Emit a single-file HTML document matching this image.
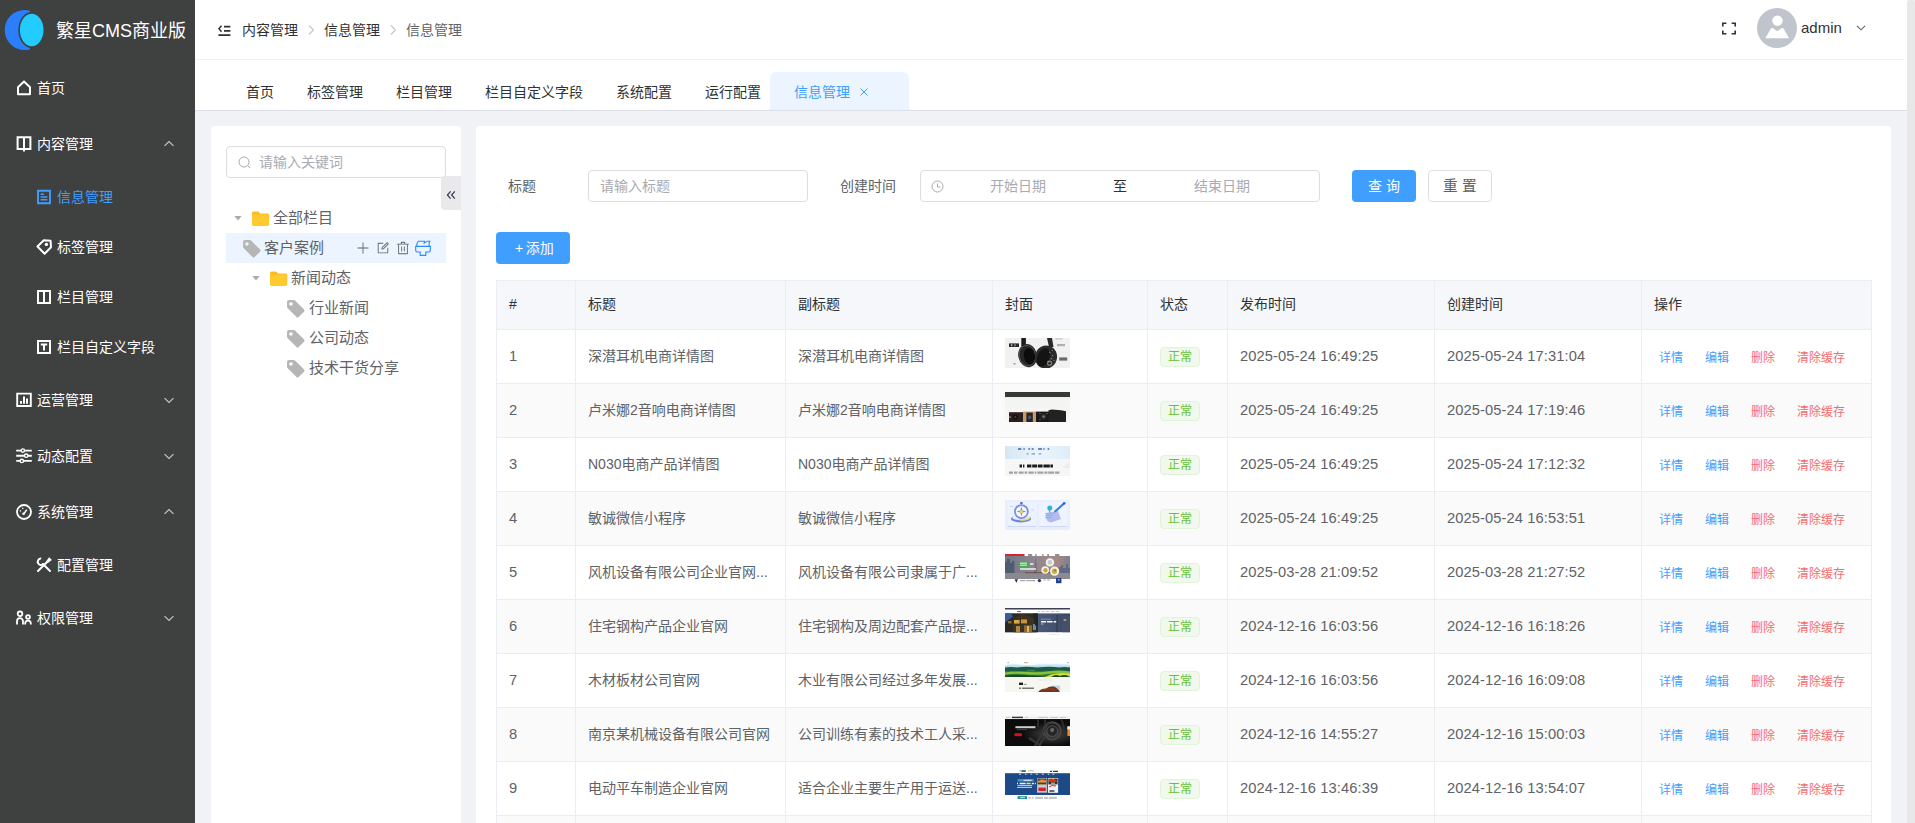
<!DOCTYPE html>
<html lang="zh-CN"><head><meta charset="utf-8"><title>繁星CMS商业版 - 信息管理</title>
<style>
*{box-sizing:border-box;margin:0;padding:0}
html,body{width:1915px;height:823px;overflow:hidden;background:#f0f2f5}
body{font-family:"Liberation Sans","Noto Sans CJK SC",sans-serif;font-size:14px;color:#606266;-webkit-font-smoothing:antialiased}
#app{position:relative;width:1915px;height:823px;overflow:hidden}
svg{display:block}
/* sidebar */
.side{position:absolute;left:0;top:0;width:195px;height:823px;background:#3f4040;color:#fff}
.logo{position:absolute;left:0;top:0;width:195px;height:60px}
.logo svg{position:absolute;left:3px;top:8px}
.logo .t{position:absolute;left:56px;top:1px;line-height:60px;font-size:18px;color:#fff;white-space:nowrap;letter-spacing:0}
.mi{position:absolute;left:0;width:195px;color:#fff;font-size:14px;white-space:nowrap}
.mi .ic{position:absolute}
.mi .tx{position:absolute;top:0}
.mi.top{height:56px;line-height:56px}
.mi.sub{height:50px;line-height:50px}
.mi.top .ic{left:16px;top:20px}
.mi.top .tx{left:37px}
.mi.sub .ic{left:36px;top:17px}
.mi.sub .tx{left:57px}
.mi .ar{position:absolute;left:163px;top:22px}
.mi.act{color:#409eff}
/* header */
.hdr{position:absolute;left:195px;top:0;width:1712px;height:60px;background:#fff}
.hdr:after{content:"";position:absolute;left:0;top:59px;width:1709px;height:1px;background:#f0f0f0}
.hdr .bc{position:absolute;top:0;line-height:60px;font-size:14px;color:#303133;white-space:nowrap}
.hdr .bc.l{color:#606266}
.hdr .sep{position:absolute;top:24px}
.tabs{position:absolute;left:195px;top:60px;width:1712px;height:51px;background:#fff;border-bottom:1px solid #dcdfe6}
.tab{position:absolute;top:12px;height:38px;line-height:40px;font-size:14px;color:#303133;white-space:nowrap}
.tab.act{color:#409eff}
/* content */
.content{position:absolute;left:195px;top:111px;width:1712px;height:712px;background:#f0f2f5}
.tree{position:absolute;left:16px;top:15px;width:250px;height:720px;background:#fff;border-radius:4px}
.main{position:absolute;left:281px;top:15px;width:1415px;height:720px;background:#fff;border-radius:4px}
.inp{position:absolute;height:32px;border:1px solid #dbdde3;border-radius:4px;background:#fff;color:#a8abb2;font-size:14px;line-height:30px;white-space:nowrap}
.tn{position:absolute;left:15px;width:220px;height:30px;line-height:30px;font-size:15px;color:#606266;white-space:nowrap}
.tn.cur{background:#ecf5ff}
.tn .ic{position:absolute}
.tn .tx{position:absolute;top:0}
.lbl{position:absolute;font-size:14px;color:#606266;line-height:32px;white-space:nowrap}
.btn{position:absolute;height:32px;line-height:32px;border-radius:4px;font-size:14px;text-align:center;white-space:nowrap}
.btn.p{background:#409eff;color:#fff}
.btn.d{background:#fff;border:1px solid #dcdfe6;color:#606266;line-height:30px}
/* table */
.tbl{position:absolute;left:20px;top:154px;width:1376px;border-left:1px solid #ebedf2;border-top:1px solid #ebedf2;font-size:14px}
.thead,.tr{display:flex;width:1375px}
.thead{height:49px;background:#f5f7fa;color:#303133}
.tr{height:54px;background:#fff}
.tr.odd{background:#fafafa}
.c{border-right:1px solid #ebedf2;border-bottom:1px solid #ebedf2;padding-left:12px;white-space:nowrap;overflow:hidden;position:relative;flex:none}
.thead .c{line-height:47px;height:49px}
.tr .c{line-height:52px;height:54px}
.c1{width:79px}.c2{width:210px}.c3{width:207px}.c4{width:155px}.c5{width:80px}.c6{width:207px}.c7{width:207px}.c8{width:230px}
.tag{display:inline-block;width:40px;height:20px;line-height:18px;border:1px solid #e1f3d8;background:#f0f9eb;color:#67c23a;font-size:12px;text-align:center;border-radius:4px;vertical-align:middle;position:relative;top:0}
.d,.n{font-size:14.7px;letter-spacing:.1px}
.c8 a{font-size:12px;position:absolute;top:2px}
.c8 a.b{color:#409eff}.c8 a.r{color:#f56c6c}
.th{position:absolute;left:12px;top:8px;width:65px;height:30px;overflow:hidden}
.sbar{position:absolute;left:1907px;top:0;width:8px;height:823px;background:#f0f2f5}
.sthumb{position:absolute;left:0;top:0;width:8px;height:823px;background:#e8e8e8;border-radius:4px 4px 0 0}

</style></head>
<body>
<div id="app">
<div class="side">
 <div class="logo">
  <svg width="44" height="44" viewBox="0 0 44 44"><circle cx="21.7" cy="22" r="20" fill="#2b7fff"/><rect x="27" y="0" width="17" height="44" fill="#3f4040"/><ellipse cx="28.7" cy="22" rx="13.4" ry="18" fill="#3f4040"/><ellipse cx="28.7" cy="22" rx="11.8" ry="16.2" fill="#22ccff"/></svg>
  <div class="t">繁星CMS商业版</div>
 </div>
 <div class="mi top" style="top:60px">
  <svg class="ic" width="16" height="16" viewBox="0 0 16 16" fill="none" stroke="#fff" stroke-width="2" stroke-linejoin="round"><path d="M2 7.2 L8 1.6 L14 7.2 V14.2 H2 Z"/></svg>
  <span class="tx">首页</span>
 </div>
 <div class="mi top" style="top:116px">
  <svg class="ic" width="16" height="16" viewBox="0 0 16 16" fill="none" stroke="#fff" stroke-width="2"><path d="M1.6 1.2 H14.4 V13 H1.6 Z M8 1.2 V15.6"/></svg>
  <span class="tx">内容管理</span>
  <svg class="ar" width="12" height="12" viewBox="0 0 12 12" fill="none" stroke="#c8c8c8" stroke-width="1.1"><path d="M1.5 7.8 L6 3.6 L10.5 7.8"/></svg>
 </div>
 <div class="mi sub act" style="top:172px">
  <svg class="ic" width="16" height="16" viewBox="0 0 16 16" fill="none" stroke="#409eff" stroke-width="1.9"><path d="M2 1.8 H14 V14.2 H2 Z"/><path d="M4.6 5.2 H8 M4.6 8 H11.4 M4.6 10.8 H11.4" stroke-width="1.4"/></svg>
  <span class="tx">信息管理</span>
 </div>
 <div class="mi sub" style="top:222px">
  <svg class="ic" width="16" height="16" viewBox="0 0 16 16" fill="none" stroke="#fff" stroke-width="2" stroke-linejoin="round"><path d="M1.5 7.5 L7.8 1.3 L14.6 1.8 L15 8.3 L8.6 14.7 Z"/><circle cx="10.4" cy="5.4" r="1.7" fill="#fff" stroke="none"/></svg>
  <span class="tx">标签管理</span>
 </div>
 <div class="mi sub" style="top:272px">
  <svg class="ic" width="16" height="16" viewBox="0 0 16 16" fill="none" stroke="#fff" stroke-width="2"><path d="M2 2 H14 V14 H2 Z M8 2 V14"/></svg>
  <span class="tx">栏目管理</span>
 </div>
 <div class="mi sub" style="top:322px">
  <svg class="ic" width="16" height="16" viewBox="0 0 16 16" fill="none" stroke="#fff" stroke-width="2"><path d="M2 2 H14 V14 H2 Z"/><path d="M4.8 5.6 H11.2 M8 5.6 V11.6" stroke-width="2"/></svg>
  <span class="tx">栏目自定义字段</span>
 </div>
 <div class="mi top" style="top:372px">
  <svg class="ic" width="16" height="16" viewBox="0 0 16 16" fill="none" stroke="#fff" stroke-width="1.9"><path d="M1.2 1.6 H14.8 V14 H1.2 Z"/><path d="M5 9 V11.8 M8 4.6 V11.8 M11 6.6 V11.8" stroke-width="2"/></svg>
  <span class="tx">运营管理</span>
  <svg class="ar" width="12" height="12" viewBox="0 0 12 12" fill="none" stroke="#c8c8c8" stroke-width="1.1"><path d="M1.5 4.2 L6 8.4 L10.5 4.2"/></svg>
 </div>
 <div class="mi top" style="top:428px">
  <svg class="ic" width="16" height="16" viewBox="0 0 16 16" fill="none" stroke="#fff" stroke-width="1.9"><path d="M0.2 2.6 H15.8 M0.2 7.7 H15.8 M0.2 12.9 H15.8"/><circle cx="6.8" cy="2.6" r="1.7" fill="#3f4040" stroke-width="1.4"/><circle cx="10.2" cy="7.7" r="1.7" fill="#3f4040" stroke-width="1.4"/><circle cx="5.8" cy="12.9" r="1.7" fill="#3f4040" stroke-width="1.4"/></svg>
  <span class="tx">动态配置</span>
  <svg class="ar" width="12" height="12" viewBox="0 0 12 12" fill="none" stroke="#c8c8c8" stroke-width="1.1"><path d="M1.5 4.2 L6 8.4 L10.5 4.2"/></svg>
 </div>
 <div class="mi top" style="top:484px">
  <svg class="ic" width="16" height="16" viewBox="0 0 16 16" fill="none" stroke="#fff" stroke-width="1.8"><circle cx="8" cy="8" r="7"/><path d="M8 9.6 L10.8 5.6" stroke-width="1.6"/><circle cx="7.6" cy="9.8" r="1.3" fill="#fff" stroke="none"/><path d="M3.8 6.6 L5 7.2 M6.6 3.8 L7 5" stroke-width="1.2"/></svg>
  <span class="tx">系统管理</span>
  <svg class="ar" width="12" height="12" viewBox="0 0 12 12" fill="none" stroke="#c8c8c8" stroke-width="1.1"><path d="M1.5 7.8 L6 3.6 L10.5 7.8"/></svg>
 </div>
 <div class="mi sub" style="top:540px">
  <svg class="ic" width="16" height="16" viewBox="0 0 16 16" fill="none" stroke="#fff" stroke-width="2" stroke-linecap="round"><path d="M2 14 L11 5 M10.4 5.6 L13.2 1.8 L14.4 3 L10.6 5.8"/><path d="M7 7 L14 14"/><path d="M5.2 1.6 A3.2 3.2 0 1 0 7.6 6.6" stroke-linecap="butt"/></svg>
  <span class="tx">配置管理</span>
 </div>
 <div class="mi top" style="top:590px">
  <svg class="ic" width="16" height="16" viewBox="0 0 16 16" fill="none" stroke="#fff" stroke-width="1.8"><circle cx="4" cy="3.8" r="2.3"/><path d="M1 14.4 V11.2 A3 3 0 0 1 7 11.2 V14.4"/><circle cx="12" cy="7" r="1.9"/><path d="M9.2 14.4 V13.4 A2.8 2.8 0 0 1 14.8 13.4 V14.4"/></svg>
  <span class="tx">权限管理</span>
  <svg class="ar" width="12" height="12" viewBox="0 0 12 12" fill="none" stroke="#c8c8c8" stroke-width="1.1"><path d="M1.5 4.2 L6 8.4 L10.5 4.2"/></svg>
 </div>
</div>

<div class="hdr">
 <svg style="position:absolute;left:23px;top:23px" width="14" height="14" viewBox="0 0 14 14" fill="none" stroke="#303133" stroke-width="1.6"><path d="M6 3.6 H12.4 M6 7.9 H12.4 M0.4 12.1 H12.4" stroke-width="1.7"/><path d="M3.5 2.7 L0.9 5.75 L3.5 8.8" stroke-width="1.5"/></svg>
 <span class="bc" style="left:47px">内容管理</span>
 <svg class="sep" style="left:111px" width="10" height="12" viewBox="0 0 10 12" fill="none" stroke="#c0c4cc" stroke-width="1.1"><path d="M3 1.5 L7.4 6 L3 10.5"/></svg>
 <span class="bc" style="left:129px">信息管理</span>
 <svg class="sep" style="left:193px" width="10" height="12" viewBox="0 0 10 12" fill="none" stroke="#c0c4cc" stroke-width="1.1"><path d="M3 1.5 L7.4 6 L3 10.5"/></svg>
 <span class="bc l" style="left:211px">信息管理</span>
 <svg style="position:absolute;left:1526px;top:22px" width="16" height="13" viewBox="0 0 16 13" fill="none" stroke="#303133" stroke-width="1.6"><path d="M1.8 4.4 V1.3 H5.4 M10.6 1.3 H14.2 V4.4 M14.2 8.6 V11.7 H10.6 M5.4 11.7 H1.8 V8.6"/></svg>
 <svg style="position:absolute;left:1562px;top:8px" width="40" height="40" viewBox="0 0 40 40"><circle cx="20" cy="20" r="20" fill="#c0c4cc"/><circle cx="20.5" cy="12.6" r="5.2" fill="#fff"/><path d="M8.3 30.2 L13.6 21 Q14.6 19.6 16 20.2 L20.2 23.2 L24.4 20.2 Q25.8 19.6 26.8 21 L32.1 30.2 Z" fill="#fff"/></svg>
 <span class="bc" style="left:1606px;font-size:15px;top:-2px">admin</span>
 <svg style="position:absolute;left:1660px;top:22px" width="12" height="12" viewBox="0 0 12 12" fill="none" stroke="#606266" stroke-width="1.1"><path d="M2 3.8 L6 7.8 L10 3.8"/></svg>
</div>
<div class="tabs">
 <svg style="position:absolute;left:567px;top:12px" width="155" height="38" viewBox="0 0 155 38"><path d="M4.5 38 Q8 38 8 34 V7 Q8 0 15 0 H140 Q147 0 147 7 V34 Q147 38 150.5 38 Z" fill="#ecf5ff"/></svg>
 <span class="tab" style="left:51px">首页</span>
 <span class="tab" style="left:112px">标签管理</span>
 <span class="tab" style="left:201px">栏目管理</span>
 <span class="tab" style="left:290px">栏目自定义字段</span>
 <span class="tab" style="left:421px">系统配置</span>
 <span class="tab" style="left:510px">运行配置</span>
 <span class="tab act" style="left:599px">信息管理</span>
 <svg style="position:absolute;left:664px;top:27px" width="10" height="10" viewBox="0 0 10 10" fill="none" stroke="#409eff" stroke-width="1"><path d="M1.5 1.5 L8.5 8.5 M8.5 1.5 L1.5 8.5"/></svg>
</div>

<div class="content">
<div class="tree">
 <div class="inp" style="left:15px;top:20px;width:220px"><svg style="position:absolute;left:11px;top:9px" width="13" height="13" viewBox="0 0 13 13" fill="none" stroke="#a8abb2" stroke-width="1"><circle cx="6" cy="6" r="5"/><path d="M9.6 9.6 L12 12"/></svg><span style="position:absolute;left:32px;top:0">请输入关键词</span></div>
 <div style="position:absolute;left:230px;top:50px;width:20px;height:34px;background:#e9e9eb;border-radius:4px 0 0 4px"><svg style="position:absolute;left:5px;top:13.5px" width="10" height="10" viewBox="0 0 10 10" fill="none" stroke="#2f3a4f" stroke-width="1.2"><path d="M4.6 1.4 L1.4 5 L4.6 8.6 M8.8 1.4 L5.6 5 L8.8 8.6"/></svg></div>
 <div class="tn" style="top:77px">
  <svg class="ic" style="left:7.5px;top:13px" width="8" height="5.4" viewBox="0 0 8 6"><path d="M0 0 H8 L4 5 Z" fill="#a8abb2"/></svg>
  <svg class="ic" style="left:24px;top:7px" width="20" height="17" viewBox="0 0 20 17"><path d="M2 3 Q2 1.4 3.6 1.4 H7.6 Q8.4 1.4 9 2.2 L9.8 3.4 H17.6 Q19.2 3.4 19.2 5 V8 H2 Z" fill="#ffb922"/><path d="M2 4.4 H19.2 V14.2 Q19.2 16 17.4 16 H3.8 Q2 16 2 14.2 Z" fill="#ffc930"/></svg>
  <span class="tx" style="left:47px">全部栏目</span>
 </div>
 <div class="tn cur" style="top:107px">
  <svg class="ic" style="left:15.5px;top:5.5px" width="20" height="20" viewBox="0 0 19 19"><path d="M1 2.8 Q1 1 2.8 1 H7.4 Q8.2 1 8.8 1.6 L17.2 10 Q18.2 11 17.2 12 L12 17.2 Q11 18.2 10 17.2 L1.6 8.8 Q1 8.2 1 7.4 Z" fill="#b6b6b6"/><circle cx="4.7" cy="4.7" r="1.7" fill="#ecf5ff"/></svg>
  <span class="tx" style="left:38px">客户案例</span>
  <svg class="ic" style="left:130px;top:8px" width="14" height="14" viewBox="0 0 1024 1024"><path fill="#606266" d="M480 480V128a32 32 0 0 1 64 0v352h352a32 32 0 1 1 0 64H544v352a32 32 0 1 1-64 0V544H128a32 32 0 0 1 0-64z"/></svg>
  <svg class="ic" style="left:150px;top:7.5px" width="14" height="14" viewBox="0 0 1024 1024"><path fill="#606266" d="M832 512a32 32 0 1 1 64 0v352a32 32 0 0 1-32 32H160a32 32 0 0 1-32-32V160a32 32 0 0 1 32-32h352a32 32 0 0 1 0 64H192v640h640z"/><path fill="#606266" d="m469.952 554.240 52.8-7.552L847.104 222.336a32 32 0 1 0-45.248-45.248L477.44 501.44l-7.552 52.8zm422.4-422.4a96 96 0 0 1 0 135.808l-331.84 331.84a32 32 0 0 1-18.112 9.088L436.8 623.68a32 32 0 0 1-36.224-36.224l15.104-105.6a32 32 0 0 1 9.024-18.112l331.904-331.84a96 96 0 0 1 135.744 0z"/></svg>
  <svg class="ic" style="left:170px;top:8px" width="14" height="14" viewBox="0 0 1024 1024"><path fill="#606266" d="M160 256H96a32 32 0 0 1 0-64h256V95.936a32 32 0 0 1 32-32h256a32 32 0 0 1 32 32V192h256a32 32 0 1 1 0 64h-64v672a32 32 0 0 1-32 32H192a32 32 0 0 1-32-32zm448-64v-64H416v64zM224 896h576V256H224zm192-128a32 32 0 0 1-32-32V416a32 32 0 0 1 64 0v320a32 32 0 0 1-32 32m192 0a32 32 0 0 1-32-32V416a32 32 0 0 1 64 0v320a32 32 0 0 1-32 32"/></svg>
  <svg class="ic" style="left:188px;top:5.5px" width="18" height="18" viewBox="0 0 1024 1024"><path fill="#2b8cff" d="M896 448H128v192a64 64 0 0 0 64 64h192v192h256V704h192a64 64 0 0 0 64-64zm-770.752-64c0-47.552 5.248-90.24 15.552-128 14.72-54.016 42.496-107.392 83.2-160h417.28l-15.36 70.336L736 96h211.2c-24.832 42.88-41.92 96.256-51.2 160a663.872 663.872 0 0 0-6.144 128H960v256a128 128 0 0 1-128 128H704v160a32 32 0 0 1-32 32H352a32 32 0 0 1-32-32V768H192A128 128 0 0 1 64 640V384h61.248zm64 0h636.544c-2.048-45.824.256-91.584 6.848-137.216 4.48-30.848 10.688-59.776 18.688-86.784h-96.640l-221.12 141.248L561.92 160H256.512c-25.856 37.888-43.776 75.456-53.952 112.832-8.768 32.064-13.248 69.120-13.312 111.168z"/></svg>
 </div>
 <div class="tn" style="top:137px">
  <svg class="ic" style="left:25.5px;top:13px" width="8" height="5.4" viewBox="0 0 8 6"><path d="M0 0 H8 L4 5 Z" fill="#a8abb2"/></svg>
  <svg class="ic" style="left:42px;top:7px" width="20" height="17" viewBox="0 0 20 17"><path d="M2 3 Q2 1.4 3.6 1.4 H7.6 Q8.4 1.4 9 2.2 L9.8 3.4 H17.6 Q19.2 3.4 19.2 5 V8 H2 Z" fill="#ffb922"/><path d="M2 4.4 H19.2 V14.2 Q19.2 16 17.4 16 H3.8 Q2 16 2 14.2 Z" fill="#ffc930"/></svg>
  <span class="tx" style="left:65px">新闻动态</span>
 </div>
 <div class="tn" style="top:167px">
  <svg class="ic" style="left:59.5px;top:5.5px" width="20" height="20" viewBox="0 0 19 19"><path d="M1 2.8 Q1 1 2.8 1 H7.4 Q8.2 1 8.8 1.6 L17.2 10 Q18.2 11 17.2 12 L12 17.2 Q11 18.2 10 17.2 L1.6 8.8 Q1 8.2 1 7.4 Z" fill="#b6b6b6"/><circle cx="4.7" cy="4.7" r="1.7" fill="#fff"/></svg>
  <span class="tx" style="left:83px">行业新闻</span>
 </div>
 <div class="tn" style="top:197px">
  <svg class="ic" style="left:59.5px;top:5.5px" width="20" height="20" viewBox="0 0 19 19"><path d="M1 2.8 Q1 1 2.8 1 H7.4 Q8.2 1 8.8 1.6 L17.2 10 Q18.2 11 17.2 12 L12 17.2 Q11 18.2 10 17.2 L1.6 8.8 Q1 8.2 1 7.4 Z" fill="#b6b6b6"/><circle cx="4.7" cy="4.7" r="1.7" fill="#fff"/></svg>
  <span class="tx" style="left:83px">公司动态</span>
 </div>
 <div class="tn" style="top:227px">
  <svg class="ic" style="left:59.5px;top:5.5px" width="20" height="20" viewBox="0 0 19 19"><path d="M1 2.8 Q1 1 2.8 1 H7.4 Q8.2 1 8.8 1.6 L17.2 10 Q18.2 11 17.2 12 L12 17.2 Q11 18.2 10 17.2 L1.6 8.8 Q1 8.2 1 7.4 Z" fill="#b6b6b6"/><circle cx="4.7" cy="4.7" r="1.7" fill="#fff"/></svg>
  <span class="tx" style="left:83px">技术干货分享</span>
 </div>
</div>

<div class="main">
<span class="lbl" style="left:32px;top:44px">标题</span>
<div class="inp" style="left:112px;top:44px;width:220px"><span style="position:absolute;left:11px;top:0">请输入标题</span></div>
<span class="lbl" style="left:364px;top:44px">创建时间</span>
<div class="inp" style="left:444px;top:44px;width:400px">
 <svg style="position:absolute;left:10px;top:9px" width="13" height="13" viewBox="0 0 13 13" fill="none" stroke="#a8abb2" stroke-width="1"><circle cx="6.5" cy="6.5" r="5.5"/><path d="M6.5 3.4 V7 H9.6"/></svg>
 <span style="position:absolute;left:69px;top:0">开始日期</span>
 <span style="position:absolute;left:192px;top:0;color:#303133">至</span>
 <span style="position:absolute;left:273px;top:0">结束日期</span>
</div>
<div class="btn p" style="left:876px;top:44px;width:64px">查 询</div>
<div class="btn d" style="left:952px;top:44px;width:64px">重 置</div>
<div class="btn p" style="left:20px;top:106px;width:74px;text-align:left;padding-left:19px"><span style="margin-right:2.5px">+</span>添加</div>

<div class="tbl">
<div class="thead"><div class="c c1">#</div><div class="c c2">标题</div><div class="c c3">副标题</div><div class="c c4">封面</div><div class="c c5">状态</div><div class="c c6">发布时间</div><div class="c c7">创建时间</div><div class="c c8">操作</div></div>
<div class="tr"><div class="c c1"><span class="n">1</span></div><div class="c c2">深潜耳机电商详情图</div><div class="c c3">深潜耳机电商详情图</div><div class="c c4"><svg class="th" width="65" height="30" viewBox="0 0 65 30" ><rect width="65" height="30" fill="#f1f1f1"/><rect x="16.3" y="0" width="4.6" height="8" fill="#1c1c1c"/><path d="M42 0 H47 L48.5 9 H44 Z" fill="#2a2a2a"/><ellipse cx="22.7" cy="17.6" rx="9.4" ry="11.6" fill="#262626" transform="rotate(-12 22.7 17.6)"/><ellipse cx="24.5" cy="18.2" rx="5.6" ry="8.4" fill="#0c0c0c" transform="rotate(-12 24.5 18.2)"/><ellipse cx="22.4" cy="17.6" rx="8.2" ry="10.4" fill="none" stroke="#5a5a5a" stroke-width=".8" transform="rotate(-12 22.4 17.6)"/><ellipse cx="41" cy="19" rx="11" ry="11.6" fill="#2b2b2b" transform="rotate(18 41 19)"/><ellipse cx="38.4" cy="19.4" rx="6" ry="9.6" fill="#141414" transform="rotate(22 38.4 19.4)"/><circle cx="44.6" cy="25.2" r="2.6" fill="#8a7a6a"/><circle cx="44.6" cy="25.2" r="1.3" fill="#222"/><path d="M44 14 l1.4 .8 M47 17 l1.2 1 M45.6 20.6 l1.6 .4 M48.6 22 l1 1 M42.8 23 l1 1.2 M46.8 12 l1 .6" stroke="#bdbdbd" stroke-width=".7"/><rect x="4" y="5.4" width="10" height="3.6" fill="#2a2a2a"/><rect x="6.2" y="6.2" width="1" height="2" fill="#ddd"/><rect x="9.6" y="6.2" width=".8" height="2" fill="#ddd"/><rect x="50.5" y=".4" width="7" height="1" fill="#b8b8b8"/><rect x="52" y="6" width="8" height="2.2" fill="#b0b0b0"/><rect x="54.2" y="19.4" width="8" height="3.2" fill="#6a6a6a"/><rect x="8.5" y="25" width="2" height="1.4" fill="#999"/></svg></div><div class="c c5"><span class="tag">正常</span></div><div class="c c6"><span class="d">2025-05-24 16:49:25</span></div><div class="c c7"><span class="d">2025-05-24 17:31:04</span></div><div class="c c8"><a class="b" style="left:17px">详情</a><a class="b" style="left:63px">编辑</a><a class="r" style="left:109px">删除</a><a class="r" style="left:155px">清除缓存</a></div></div>
<div class="tr odd"><div class="c c1"><span class="n">2</span></div><div class="c c2">卢米娜2音响电商详情图</div><div class="c c3">卢米娜2音响电商详情图</div><div class="c c4"><svg class="th" width="65" height="30" viewBox="0 0 65 30" ><defs><linearGradient id="g2" x1="0" y1="0" x2="0" y2="1"><stop offset="0" stop-color="#e2e3e1"/><stop offset=".25" stop-color="#f4f4f3"/><stop offset="1" stop-color="#f7f7f6"/></linearGradient></defs><rect width="65" height="30" fill="url(#g2)"/><rect width="65" height="5" fill="#353a35"/><rect x="4" y="20.2" width="14" height="9.8" fill="#2a1f1d"/><circle cx="10.4" cy="25" r="2.6" fill="#15100f"/><circle cx="10.4" cy="25" r="1" fill="#3a4558"/><rect x="4" y="24.6" width="2" height="1" fill="#b9a48a"/><rect x="18" y="19.6" width="13" height="10.4" fill="#c79a6c"/><rect x="21.4" y="20.6" width="6.4" height="9.4" fill="#2a2320"/><circle cx="24.6" cy="25.4" r="1.8" fill="#3d5574"/><rect x="31" y="19.6" width="14" height="10.4" fill="#191919"/><circle cx="38.6" cy="24.6" r="3" fill="#2e2e2e"/><circle cx="38.6" cy="24.6" r="1.1" fill="#8a8a8a"/><circle cx="35" cy="21.4" r=".5" fill="#aaa"/><circle cx="42" cy="21.4" r=".5" fill="#aaa"/><circle cx="35" cy="27.8" r=".5" fill="#aaa"/><path d="M43.5 18.2 L47 17.4 L56 18.2 L61 19.2 V30 H43.5 Z" fill="#222"/></svg></div><div class="c c5"><span class="tag">正常</span></div><div class="c c6"><span class="d">2025-05-24 16:49:25</span></div><div class="c c7"><span class="d">2025-05-24 17:19:46</span></div><div class="c c8"><a class="b" style="left:17px">详情</a><a class="b" style="left:63px">编辑</a><a class="r" style="left:109px">删除</a><a class="r" style="left:155px">清除缓存</a></div></div>
<div class="tr"><div class="c c1"><span class="n">3</span></div><div class="c c2">N030电商产品详情图</div><div class="c c3">N030电商产品详情图</div><div class="c c4"><svg class="th" width="65" height="30" viewBox="0 0 65 30" ><defs><linearGradient id="g3" x1="0" y1="0" x2="1" y2="0"><stop offset="0" stop-color="#d6e6f5"/><stop offset=".5" stop-color="#eaf4fc"/><stop offset="1" stop-color="#dfecf8"/></linearGradient></defs><rect width="65" height="30" fill="#f6f6f6"/><rect width="65" height="13" fill="url(#g3)"/><path d="M13 3 h3.4 m2 0 h1.4 m3.6 0 h1.6 m1.6 0 h2 m4.4 0 h4 m1.4 0 h1.2 m3 0 h1.6" stroke="#3a68ad" stroke-width="1.3"/><path d="M21.6 7.8 h2 m3 0 h3.4 m3.6 0 h2.6" stroke="#6f9bd0" stroke-width="1.2"/><path d="M14.6 20 h2.4 m1 0 h1.4 m2.6 0 h4.4 m.8 0 h5 m.8 0 h4.6 m.8 0 h6.4 m.6 0 h2.6" stroke="#1c1c1c" stroke-width="2.8"/><path d="M4 26.6 h4 m1 0 h3.2 m1.4 0 h5 m1 0 h2.6 m1.2 0 h5.4 m1 0 h1.6 m1 0 h6 m1 0 h3 m.8 0 h6 m.8 0 h4.4" stroke="#a2a2a2" stroke-width="2.2"/><path d="M57 22 L65 15 V22 Z" fill="#ededed"/></svg></div><div class="c c5"><span class="tag">正常</span></div><div class="c c6"><span class="d">2025-05-24 16:49:25</span></div><div class="c c7"><span class="d">2025-05-24 17:12:32</span></div><div class="c c8"><a class="b" style="left:17px">详情</a><a class="b" style="left:63px">编辑</a><a class="r" style="left:109px">删除</a><a class="r" style="left:155px">清除缓存</a></div></div>
<div class="tr odd"><div class="c c1"><span class="n">4</span></div><div class="c c2">敏诚微信小程序</div><div class="c c3">敏诚微信小程序</div><div class="c c4"><svg class="th" width="65" height="30" viewBox="0 0 65 30" ><rect width="65" height="30" fill="#e8eefd"/><rect x="2.6" y="1.4" width="28.6" height="25.2" fill="#edf2ff"/><rect x="34" y="1.4" width="28.4" height="25.2" fill="#edf3ff"/><rect x="2.6" y="26.2" width="28.6" height=".8" fill="#c9d4f3"/><rect x="34" y="26.2" width="28.4" height=".8" fill="#c9d4f3"/><ellipse cx="16" cy="18.8" rx="10.2" ry="3.6" fill="#6e83e6"/><ellipse cx="16" cy="17.6" rx="8.8" ry="2.6" fill="#e9eeff"/><path d="M14 18.6 q5 1.6 10.6 -1.4 l.6 1.6 q-5 3 -11 1.4 z" fill="#f0e04a"/><circle cx="16.4" cy="11.6" r="7.4" fill="#7d8fe3"/><circle cx="16.4" cy="11.6" r="5.6" fill="#f3f6ff"/><path d="M16.4 6.6 L17.4 10.6 L21.4 11.6 L17.4 12.6 L16.4 16.6 L15.4 12.6 L11.4 11.6 L15.4 10.6 Z" fill="#6d8be8"/><circle cx="16.4" cy="11.6" r="1.6" fill="#f2d83a"/><rect x="15" y="2" width="2.8" height="2" rx="1" fill="#5564c9"/><path d="M5 6.4 h3 M26 10 h3" stroke="#b9c4f2" stroke-width=".8"/><path d="M41 13 L53 11 L56 19 L46 22.6 Q42 22 41 18 Z" fill="#b6b9ee"/><path d="M40.4 13.6 h8 M40.4 15.6 h7 M40.4 17.6 h6" stroke="#69c8ee" stroke-width="1.1"/><circle cx="44.8" cy="8" r="2.5" fill="#35b1d9"/><path d="M44.4 10 l.4 2.6" stroke="#35b1d9" stroke-width="1.2"/><path d="M58.6 2.6 L60 4 L51 12 L49 12.6 L49.6 10.6 Z" fill="#2f7ce6"/><circle cx="59.2" cy="3.2" r="1.3" fill="#2a62d4"/></svg></div><div class="c c5"><span class="tag">正常</span></div><div class="c c6"><span class="d">2025-05-24 16:49:25</span></div><div class="c c7"><span class="d">2025-05-24 16:53:51</span></div><div class="c c8"><a class="b" style="left:17px">详情</a><a class="b" style="left:63px">编辑</a><a class="r" style="left:109px">删除</a><a class="r" style="left:155px">清除缓存</a></div></div>
<div class="tr"><div class="c c1"><span class="n">5</span></div><div class="c c2">风机设备有限公司企业官网...</div><div class="c c3">风机设备有限公司隶属于广...</div><div class="c c4"><svg class="th" width="65" height="30" viewBox="0 0 65 30" ><defs><linearGradient id="g5" x1="0" y1="0" x2="1" y2="0"><stop offset="0" stop-color="#6d7585"/><stop offset=".45" stop-color="#8f8792"/><stop offset=".8" stop-color="#a58a86"/><stop offset="1" stop-color="#7d7f90"/></linearGradient></defs><rect width="65" height="30" fill="#fff"/><rect y="2" width="65" height="23" fill="url(#g5)"/><rect y="19" width="65" height="6" fill="#8c8b92" opacity=".85"/><path d="M0 8 h2 v-3 h3 v4 h2 v-2 h2.4 v12 H0 Z" fill="#4d5d70"/><path d="M29 19 L30.6 2 L32.2 19 Z" fill="#776f78"/><path d="M54 19 v-6 h2 v-2 h2 v3 h3 v-4 h2 v4 h2 v5 Z" fill="#5f6b86"/><path d="M20 18.6 h34" stroke="#6a4a3a" stroke-width="1.4" opacity=".7"/><rect width="19.5" height="2" fill="#da2330"/><path d="M23 1 h4.2 m3 0 h1.4 m5.6 0 h1.4 m3.6 0 h1.8 m6 0 h4.4" stroke="#222" stroke-width="1.1"/><rect x="14" y="7.6" width="9.4" height="5.4" rx="1.4" fill="#44ad4c"/><path d="M15 9.2 h7 M15 11.2 h7" stroke="#e8f6e4" stroke-width="1"/><path d="M25 10 h3.4 M15 15 h16" stroke="#f1f1f1" stroke-width="1.3"/><circle cx="44.9" cy="8.4" r="4.2" fill="#f4f4f4"/><circle cx="44.9" cy="8.4" r="2.4" fill="#c9c9c9"/><circle cx="40.2" cy="16" r="3.8" fill="#f6f4ea"/><circle cx="40.4" cy="16.2" r="2.2" fill="#d0a23a"/><circle cx="49.6" cy="17.2" r="4.6" fill="#f6f4ea"/><circle cx="49.4" cy="17.2" r="2.7" fill="#d6b03a"/><circle cx="50" cy="16.4" r="1.1" fill="#7d7d7d"/><path d="M9.6 25.2 h3.4 l-1.7 3.6 z" fill="#1d2c57"/><path d="M15 26.6 h5.4 m.8 0 h9" stroke="#a9a9a9" stroke-width="1.4"/><circle cx="34.4" cy="26.6" r="1.7" fill="#1d3a74"/><path d="M38.6 26 h2 m1.6 0 h2.6" stroke="#999" stroke-width="1.2"/><rect x="51" y="24" width="5.4" height="5.2" fill="#20408f"/><rect x="52.8" y="25.4" width="1.8" height="1" fill="#dfe6f7"/></svg></div><div class="c c5"><span class="tag">正常</span></div><div class="c c6"><span class="d">2025-03-28 21:09:52</span></div><div class="c c7"><span class="d">2025-03-28 21:27:52</span></div><div class="c c8"><a class="b" style="left:17px">详情</a><a class="b" style="left:63px">编辑</a><a class="r" style="left:109px">删除</a><a class="r" style="left:155px">清除缓存</a></div></div>
<div class="tr odd"><div class="c c1"><span class="n">6</span></div><div class="c c2">住宅钢构产品企业官网</div><div class="c c3">住宅钢构及周边配套产品提...</div><div class="c c4"><svg class="th" width="65" height="30" viewBox="0 0 65 30" ><defs><linearGradient id="g6" x1="0" y1="0" x2="1" y2="0"><stop offset="0" stop-color="#56658a"/><stop offset=".55" stop-color="#4a5878"/><stop offset="1" stop-color="#3d4862"/></linearGradient></defs><rect width="65" height="30" fill="#fff"/><rect width="65" height="1.5" fill="#3b4152"/><path d="M12 3.6 h4" stroke="#3a62a8" stroke-width="1"/><path d="M33 3.6 h2 m1.6 0 h3 m1.4 0 h3 m2 0 h3.4 m1.4 0 h3.4" stroke="#b6b6b6" stroke-width=".8"/><rect y="5.4" width="65" height="18.8" fill="url(#g6)"/><path d="M0 5.4 H33 V24.2 H0 Z" fill="#2b2a20"/><path d="M0 5.4 h6 l2 3 l-8 6 z" fill="#3a5d9a"/><path d="M8 10 L18 5.8 L31 11 V24.2 H8 Z" fill="#3a3323"/><rect x="9" y="12" width="5.6" height="3.6" fill="#d9a64a"/><rect x="16" y="11.4" width="6" height="4" fill="#c9913d"/><rect x="11" y="18" width="4" height="6.2" fill="#b7853a"/><rect x="19" y="17.4" width="8" height="6.8" fill="#8d6a33"/><rect x="22" y="18" width="2" height="6.2" fill="#e0b860"/><rect x="28" y="16" width="3" height="6" fill="#6d89b8"/><rect x="3" y="13" width="3.6" height="2.4" fill="#8a6a35"/><path d="M28 5.4 h5 v12 h-3 z" fill="#20251f"/><rect x="51.6" y="6.6" width="1" height="17.6" fill="#2f394f"/><rect x="57" y="8" width="8" height="16.2" fill="#44506a"/><rect x="58.6" y="11" width="2.6" height="2" fill="#9d9a74"/><path d="M36 11.2 h10" stroke="#9aa6c2" stroke-width=".7"/><path d="M36 13.8 h5 m1 0 h5.6 m1 0 h2.6" stroke="#f4f6fa" stroke-width="1.5"/><path d="M36 16 h2.4" stroke="#c9d0e0" stroke-width=".8"/><path d="M44 26.6 h11" stroke="#ececec" stroke-width="1"/></svg></div><div class="c c5"><span class="tag">正常</span></div><div class="c c6"><span class="d">2024-12-16 16:03:56</span></div><div class="c c7"><span class="d">2024-12-16 16:18:26</span></div><div class="c c8"><a class="b" style="left:17px">详情</a><a class="b" style="left:63px">编辑</a><a class="r" style="left:109px">删除</a><a class="r" style="left:155px">清除缓存</a></div></div>
<div class="tr"><div class="c c1"><span class="n">7</span></div><div class="c c2">木材板材公司官网</div><div class="c c3">木业有限公司经过多年发展...</div><div class="c c4"><svg class="th" width="65" height="30" viewBox="0 0 65 30" ><defs><linearGradient id="g7" x1="0" y1="0" x2="0" y2="1"><stop offset="0" stop-color="#eaf4fb"/><stop offset="1" stop-color="#9fd0ea"/></linearGradient></defs><rect width="65" height="30" fill="#f7f7f2"/><rect width="65" height="1.6" fill="#fff"/><path d="M2.4 .8 h1.6 M19 .8 h4" stroke="#9a8a5a" stroke-width=".8"/><path d="M62 .8 h2" stroke="#7aa05a" stroke-width=".8"/><rect y="1.6" width="65" height="4.4" fill="url(#g7)"/><path d="M0 3 q8 -2 16 -.4 q8 1.4 18 -.6 q10 -1.6 31 .6 V1.6 H0 Z" fill="#fff"/><path d="M0 5.4 q6 -1 12 0 q10 -1.6 20 .2 q12 -1.8 22 -.2 q6 -1 11 .2 V10 H0 Z" fill="#1d5a44"/><rect y="9" width="65" height="6" fill="#2f7a35"/><path d="M0 10.6 q10 -2 24 -.6 q10 1 20 -.8 q10 -1.6 21 .4 v2.4 q-12 -1.4 -22 0 q-12 1.6 -24 .2 q-10 -1 -19 .6 z" fill="#86c33a"/><path d="M46 12.6 q8 -2.4 19 -1 V15 H40 Z" fill="#d4dc45"/><path d="M47 14.4 q4 -2.6 8 -.4 q4 -2 9 .2 L65 15 H46 Z" fill="#1f4a22"/><path d="M0 13.4 q14 -1 30 .4 l10 1.2 H0 Z" fill="#17482a"/><path d="M5 9.4 h10 M22 8.4 h8" stroke="#3f8e6a" stroke-width=".9"/><rect x="14" y="20.6" width="4" height="2.4" fill="#1e1e1e"/><path d="M18.6 22.4 h3" stroke="#777" stroke-width=".8"/><path d="M14 26.2 h2 m1 0 h12" stroke="#777" stroke-width="1.5"/><path d="M33 18 h4 m2 0 h3 m2 0 h4" stroke="#e3e3dc" stroke-width="1"/><rect x="47" y="23.6" width="8.2" height="4.6" fill="#b9d3e8"/><path d="M33 30 q3 -3.4 8 -3.4 q3 -2.6 7 -2 q4 .6 7 5.4 Z" fill="#74341c"/><path d="M38 28 q3 -1.6 6 -1 M45 27 q3 -.4 5 1.4" stroke="#a3542c" stroke-width=".8" fill="none"/></svg></div><div class="c c5"><span class="tag">正常</span></div><div class="c c6"><span class="d">2024-12-16 16:03:56</span></div><div class="c c7"><span class="d">2024-12-16 16:09:08</span></div><div class="c c8"><a class="b" style="left:17px">详情</a><a class="b" style="left:63px">编辑</a><a class="r" style="left:109px">删除</a><a class="r" style="left:155px">清除缓存</a></div></div>
<div class="tr odd"><div class="c c1"><span class="n">8</span></div><div class="c c2">南京某机械设备有限公司官网</div><div class="c c3">公司训练有素的技术工人采...</div><div class="c c4"><svg class="th" width="65" height="30" viewBox="0 0 65 30" ><defs><radialGradient id="g8" cx=".72" cy=".55" r=".45"><stop offset="0" stop-color="#4a4a4a"/><stop offset=".5" stop-color="#2a2a2a"/><stop offset="1" stop-color="#0c0c0c"/></radialGradient></defs><rect width="65" height="30" fill="#0c0c0c"/><rect width="65" height="3.2" fill="#f3f3f3"/><path d="M7 1.4 h11" stroke="#3a3a3a" stroke-width="1.4"/><path d="M1 1.4 h4 M20 1.4 h3 m10 0 h10 m2 0 h8 m2 0 h6" stroke="#c4c4c4" stroke-width=".9"/><rect y="3.2" width="65" height="26.8" fill="url(#g8)"/><circle cx="47.2" cy="15" r="8.6" fill="none" stroke="#444" stroke-width="2.2"/><circle cx="47.2" cy="15" r="5.4" fill="#262626" stroke="#585858" stroke-width=".8"/><circle cx="47.2" cy="14" r="2" fill="#6a6a6a"/><path d="M30 30 L44 6 M34 30 L40 20 M24 22 L36 30" stroke="#363636" stroke-width="2.2"/><path d="M33 3.2 v8 M40 3.2 v5 M56 3.2 q4 6 2 14" stroke="#2b2b2b" stroke-width="2" fill="none"/><path d="M10.4 11.2 h20" stroke="#cfcfcf" stroke-width="2"/><path d="M12 13.6 h10" stroke="#555" stroke-width=".8"/><rect x="9.4" y="17.2" width="7.6" height="3" rx="1" fill="#d0121c"/><rect x="62.4" y="10.4" width="2.6" height="9.6" fill="#e8852a"/><rect x="62.4" y="10.4" width="2.6" height="3" fill="#f1efe8"/></svg></div><div class="c c5"><span class="tag">正常</span></div><div class="c c6"><span class="d">2024-12-16 14:55:27</span></div><div class="c c7"><span class="d">2024-12-16 15:00:03</span></div><div class="c c8"><a class="b" style="left:17px">详情</a><a class="b" style="left:63px">编辑</a><a class="r" style="left:109px">删除</a><a class="r" style="left:155px">清除缓存</a></div></div>
<div class="tr"><div class="c c1"><span class="n">9</span></div><div class="c c2">电动平车制造企业官网</div><div class="c c3">适合企业主要生产用于运送...</div><div class="c c4"><svg class="th" width="65" height="30" viewBox="0 0 65 30" ><rect width="65" height="30" fill="#fff"/><path d="M14 .9 h2.2" stroke="#999" stroke-width=".8"/><rect x="16.4" y=".2" width="4.4" height="1.7" fill="#1d6b5a"/><path d="M23.4 .8 h5.4" stroke="#a8a8a8" stroke-width=".9"/><path d="M45 1.4 h2 m1 0 h5" stroke="#2a3a4a" stroke-width="1.2"/><rect y="3.2" width="65" height="21.8" fill="#1c4a86"/><path d="M14 4.2 h2 m4 0 h1.6 m4 0 h1.6 m3.6 0 h2 m4 0 h2 m4 0 h1.6 m3 0 h2" stroke="#dfe8f4" stroke-width=".9"/><rect x="12.6" y="9" width="16.2" height="2.6" fill="#3f8ee2"/><path d="M18.6 10.3 h8" stroke="#eaf3ff" stroke-width="1"/><path d="M12 13.5 h1 m1.6 0 h6 m1 0 h1.6 m3.6 0 h2 m1 0 h1" stroke="#f4f6fa" stroke-width="1.5"/><path d="M22.8 13.5 h3" stroke="#f0d63a" stroke-width="1.5"/><path d="M12.6 15.6 h14.6 M12 17.4 h15" stroke="#c3d3ea" stroke-width="1"/><rect x="32" y="8" width="10" height="14.8" fill="#a9b3c4"/><rect x="42.9" y="8" width="10.2" height="14.8" fill="#e9ecf2"/><rect x="32.6" y="8.6" width="8.8" height="5.8" fill="#5a3a2a"/><path d="M33 11 q4 -3 8 -.4 v2 h-8 z" fill="#d8a43a"/><path d="M34 10.4 q3 -1.6 6 0" stroke="#e8452a" stroke-width="1" fill="none"/><rect x="32.6" y="15.6" width="8.8" height="6.4" fill="#c8ccd6"/><path d="M33.4 17.6 h7.4 v3.4 h-7.4 z" fill="#d82027"/><path d="M32.6 15.4 h8.8" stroke="#ecd23a" stroke-width="1.2"/><rect x="43.4" y="8.6" width="9.2" height="5.8" fill="#33302e"/><path d="M44 10 h7.6 v2 h-7.6 z" fill="#e2261c"/><path d="M44 9 h1.6 m1 0 h3" stroke="#f0d63a" stroke-width=".9"/><path d="M46 13.2 h4" stroke="#e8c43a" stroke-width="1.2"/><rect x="43.4" y="15.2" width="9.2" height="3.2" fill="#f6f6f6"/><path d="M44 17 l3 -1.4 l4 .4" stroke="#d8262a" stroke-width="1" fill="none"/><rect x="43.4" y="18.8" width="9.2" height="3.4" fill="#f0f2f6"/><path d="M44.4 21 h5" stroke="#3a2a2a" stroke-width="1.4"/><rect x="12.6" y="26.2" width="9.4" height="2.8" fill="#1f8a8c"/><path d="M15 27.6 h5" stroke="#d6f0ee" stroke-width=".9"/><path d="M23.4 27.8 h2.4 m1 0 h1.6 m1.6 0 h8 m1 0 h4 m.8 0 h8" stroke="#c6c6c6" stroke-width="2.2"/></svg></div><div class="c c5"><span class="tag">正常</span></div><div class="c c6"><span class="d">2024-12-16 13:46:39</span></div><div class="c c7"><span class="d">2024-12-16 13:54:07</span></div><div class="c c8"><a class="b" style="left:17px">详情</a><a class="b" style="left:63px">编辑</a><a class="r" style="left:109px">删除</a><a class="r" style="left:155px">清除缓存</a></div></div>
<div class="tr odd"><div class="c c1"></div><div class="c c2"></div><div class="c c3"></div><div class="c c4"></div><div class="c c5"></div><div class="c c6"></div><div class="c c7"></div><div class="c c8"></div></div>
</div>
</div>
</div>
<div class="sbar"><div class="sthumb"></div></div>
</div>
</body></html>
